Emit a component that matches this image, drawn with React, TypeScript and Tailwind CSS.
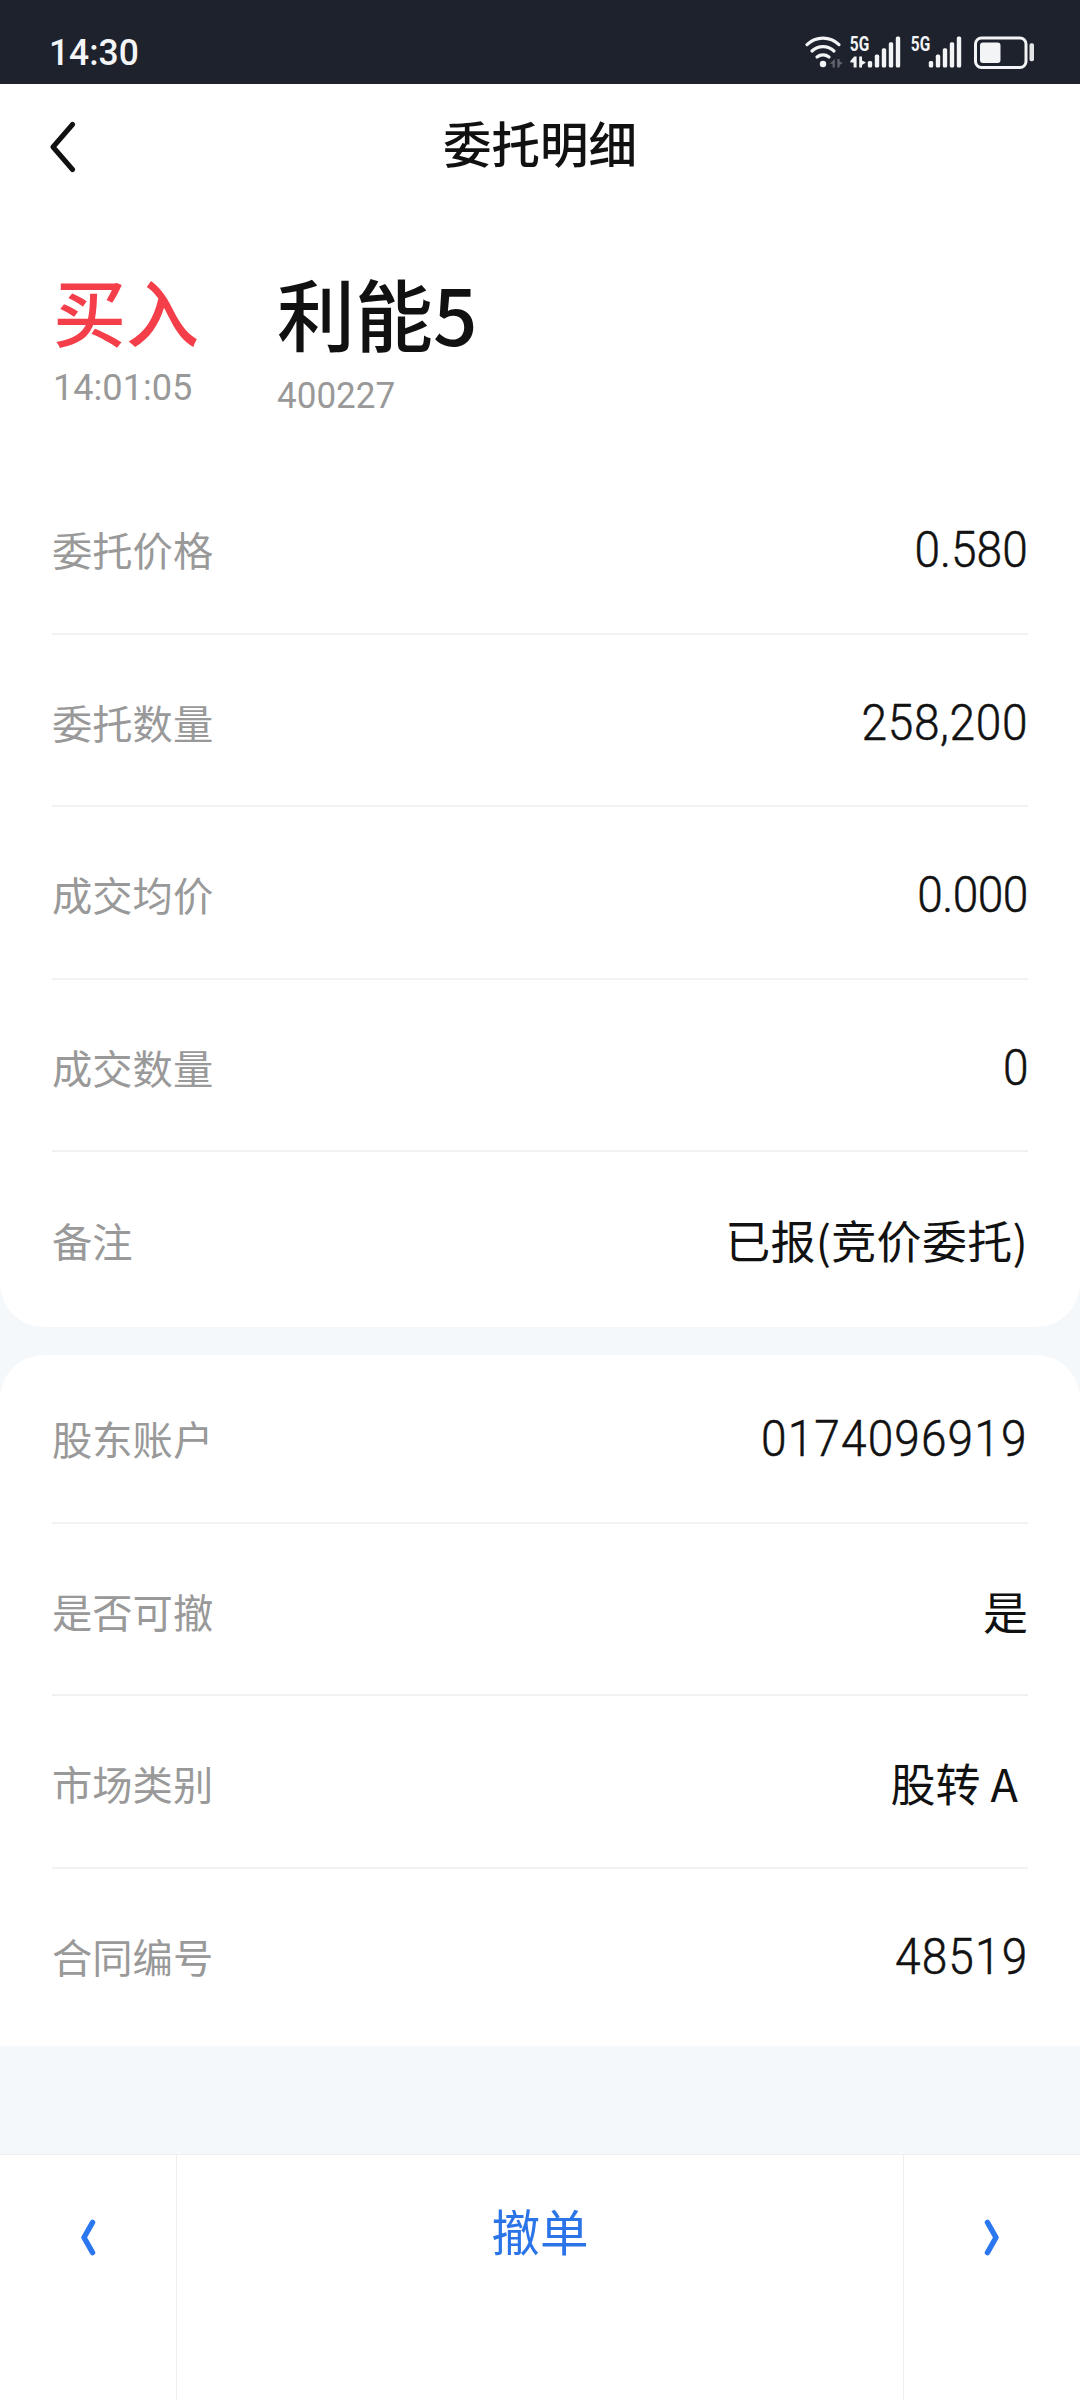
import React from 'react';
import clsx from 'clsx';

interface DetailItem {
  label: string;
  value: string;
  numeric?: boolean;
  tracking?: string;
}

const orderItems: DetailItem[] = [
  { label: '委托价格', value: '0.580', numeric: true },
  { label: '委托数量', value: '258,200', numeric: true, tracking: 'tracking-[.7px]' },
  { label: '成交均价', value: '0.000', numeric: true, tracking: 'tracking-[-.6px]' },
  { label: '成交数量', value: '0', numeric: true },
  { label: '备注', value: '已报(竞价委托)', tracking: 'tracking-[.3px]' },
];

const accountItems: DetailItem[] = [
  { label: '股东账户', value: '0174096919', numeric: true, tracking: 'tracking-[1.2px]' },
  { label: '是否可撤', value: '是' },
  { label: '市场类别', value: '股转 A ' },
  { label: '合同编号', value: '48519', numeric: true, tracking: 'tracking-[1.2px]' },
];

function SignalBars({ x }: { x: number }) {
  return (
    <g fill="#f3f4f6">
      <rect x={x} y="26" width="4.4" height="6.6" rx="1.6" />
      <rect x={x + 7} y="19.6" width="4.4" height="13" rx="1.6" />
      <rect x={x + 14} y="13.2" width="4.4" height="19.4" rx="1.6" />
      <rect x={x + 21} y="7.2" width="4.4" height="25.4" rx="1.6" />
      <rect x={x + 28} y="1.4" width="4.4" height="31.2" rx="1.6" />
    </g>
  );
}

function StatusIcons() {
  return (
    <svg width="232" height="46" viewBox="0 -10 232 46" fill="none">
      {/* Wifi */}
      <g stroke="#f3f4f6" strokeWidth="3.2" strokeLinecap="round">
        <path d="M3 9.6a23 23 0 0 1 32 0" />
        <path d="M8 16a16 16 0 0 1 22 0" />
        <path d="M13 22a9.500 9.500 0 0 1 12 0" />
      </g>
      <circle cx="19" cy="29" r="3.2" fill="#f3f4f6" />
      <path d="M30.800 24v8.500h-2.200v-3.700h-3zM33.400 32.500V24h2.200v2.500l3.200 1.600-3.200 2v2.400z" fill="#62656d" />

      {/* Sim 1 */}
      <text x="45.800" y="15.700" fontSize="20" fontWeight="700" textLength="19.400" lengthAdjust="spacingAndGlyphs" fill="#f3f4f6">5G</text>
      <path d="M52.600 21.500v11h-3v-5h-3.200v-1.600l3.800-4.400zM55.200 32.500v-11h2.800v4l4 2-4 2.400v2.600z" fill="#f3f4f6" />
      <SignalBars x={63.8} />

      {/* Sim 2 */}
      <text x="106.800" y="15.700" fontSize="20" fontWeight="700" textLength="19.400" lengthAdjust="spacingAndGlyphs" fill="#f3f4f6">5G</text>
      <SignalBars x={124.8} />

      {/* Battery */}
      <rect x="171.500" y="3" width="50.500" height="29.500" rx="6" stroke="#f3f4f6" strokeWidth="3" />
      <rect x="176" y="7.500" width="20.500" height="20.500" rx="3" fill="#f3f4f6" />
      <rect x="225.500" y="8.300" width="4.500" height="18" rx="1.800" fill="#e3e4e6" />
    </svg>
  );
}

function DetailRow({ item, last }: { item: DetailItem; last: boolean }) {
  return (
    <div
      className={clsx(
        'flex h-[172.600px] items-center justify-between pt-[4px] border-b-2',
        last ? 'border-transparent' : 'border-[#f2f2f2]'
      )}
    >
      <span className="text-[40.300px] text-[#999999]">{item.label}</span>
      {item.numeric ? (
        <span
          className={clsx(
            'inline-block origin-right scale-x-[.93] pt-[3px] font-[Roboto] text-[49.500px] font-light [-webkit-text-stroke:0.5px_#111111]',
            item.tracking
          )}
        >
          {item.value}
        </span>
      ) : (
        <span className={clsx('whitespace-pre pb-[1px] text-[45px]', item.tracking)}>{item.value}</span>
      )}
    </div>
  );
}

export default function App() {
  return (
    <div className="flex h-[2400px] w-[1080px] flex-col overflow-hidden bg-[#f4f8fb] font-['Noto_Sans_CJK_SC',sans-serif] leading-none text-[#111111]">
      {/* Status Bar */}
      <div className="flex h-[84px] shrink-0 justify-between bg-[#1e222d] pl-[49px] pr-[44px] pt-[25px] font-[Roboto]">
        <span className="inline-block origin-left scale-x-[.97] pt-[10px] text-[36.500px] font-medium text-[#f3f4f6]">14:30</span>
        <StatusIcons />
      </div>

      <div className="h-[1243px] shrink-0 rounded-b-[44px] bg-white">
        {/* Title */}
        <div className="grid h-[126px] grid-cols-[200px_1fr_200px] items-center">
          <button className="pl-[49px]">
            <svg width="27" height="52" viewBox="0 0 27 52" fill="none" stroke="#111111" strokeWidth="5" strokeLinecap="round" strokeLinejoin="round">
              <path d="M23.500 3.500L4 26l19.500 22.500" />
            </svg>
          </button>
          <h1 className="pb-[9px] text-center text-[48.500px] font-medium">委托明细</h1>
        </div>

        {/* Stock */}
        <div className="flex h-[252px] pl-[53px] pt-[63px]">
          <div className="w-[224px]">
            <p className="text-[73px] font-medium text-[#f43e49]">买入</p>
            <p className="mt-[24px] origin-left scale-x-[.99] font-[Roboto] text-[36.500px] text-[#999999]">14:01:05</p>
          </div>
          <div>
            <p className="text-[78px] font-medium">利能5</p>
            <p className="mt-[27px] origin-left scale-x-[.96] font-[Roboto] text-[36.500px] text-[#999999]">400227</p>
          </div>
        </div>

        <div className="px-[52px]">
          {orderItems.map((item, i) => (
            <DetailRow key={item.label} item={item} last={i === orderItems.length - 1} />
          ))}
        </div>
      </div>

      <div className="mt-7 h-[691px] shrink-0 rounded-t-[44px] bg-white px-[52px]">
        <div className="-mt-[4px]">
          {accountItems.map((item, i) => (
            <DetailRow key={item.label} item={item} last={i === accountItems.length - 1} />
          ))}
        </div>
      </div>

      {/* Bottom Actions */}
      <div className="mt-[108px] flex flex-1 border-t border-[#eeeeee] bg-white">
        <button className="flex w-[177px] justify-center border-r border-[#eeeeee] pt-[64px]">
          <svg width="16" height="37" viewBox="0 0 16 37" fill="none" stroke="#2b77f0" strokeWidth="5.500" strokeLinecap="round" strokeLinejoin="round">
            <path d="M12.500 3.500L4 18.500l8.500 15" />
          </svg>
        </button>
        <button className="flex flex-1 justify-center pt-[51px] text-[48.500px] text-[#2b74e8]">撤单</button>
        <button className="flex w-[177px] justify-center border-l border-[#eeeeee] pt-[64px]">
          <svg width="16" height="37" viewBox="0 0 16 37" fill="none" stroke="#2b77f0" strokeWidth="5.500" strokeLinecap="round" strokeLinejoin="round">
            <path d="M3.500 3.500L12 18.500l-8.500 15" />
          </svg>
        </button>
      </div>
    </div>
  );
}
